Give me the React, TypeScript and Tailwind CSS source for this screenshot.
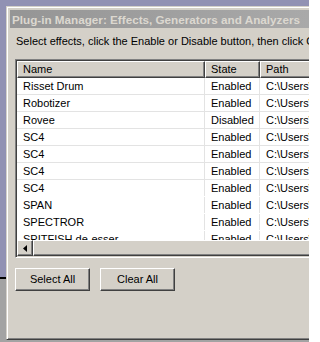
import React from "react";

const rows: { name: string; state: string; line: boolean }[] = [
  { name: "Risset Drum", state: "Enabled", line: true },
  { name: "Robotizer", state: "Enabled", line: true },
  { name: "Rovee", state: "Disabled", line: true },
  { name: "SC4", state: "Enabled", line: true },
  { name: "SC4", state: "Enabled", line: true },
  { name: "SC4", state: "Enabled", line: true },
  { name: "SC4", state: "Enabled", line: false },
  { name: "SPAN", state: "Enabled", line: false },
  { name: "SPECTROR", state: "Enabled", line: false },
  { name: "SPITFISH de-esser", state: "Enabled", line: false },
];

const raised =
  "border border-t-white border-l-white border-b-[#404040] border-r-[#404040] shadow-[inset_-1px_-1px_#808080]";

function HeaderCell({ label, w }: { label: string; w: string }) {
  return (
    <div className={`${w} h-[17px] shrink-0 bg-[#d4d0c8] ${raised} pl-[5px] flex items-center`}>
      {label}
    </div>
  );
}

function Button({ label }: { label: string }) {
  return (
    <div className={`w-[75px] h-[23px] bg-[#d4d0c8] ${raised} flex items-center justify-center`}>
      {label}
    </div>
  );
}

export default function App() {
  return (
    <div
      className="w-[309px] h-[342px] overflow-hidden flex text-[11px] leading-[13px] text-black"
      style={{ fontFamily: '"Liberation Sans", Arial, sans-serif' }}
    >
      <div className="w-[6px] shrink-0 flex flex-col">
        <div className="h-[277px] bg-[#9191b3]" />
        <div className="h-[2px] bg-black" />
        <div className="flex-1 bg-[#a3a3a3]" />
      </div>

      <div className="flex-1 min-w-0 flex flex-col">
        <div className="h-[6px] shrink-0 bg-[#9191b3]" />

        {/* dialog window */}
        <div className="h-[334px] w-[640px] shrink-0 bg-[#d4d0c8] border border-t-[#d4d0c8] border-l-[#d4d0c8] border-b-[#404040] border-r-[#404040] shadow-[inset_1px_1px_white,inset_-1px_-1px_#808080] p-[3px] flex flex-col">
          <div className="h-[18px] shrink-0 bg-gradient-to-r from-[#959595] to-[#c0c0c0] flex items-center pl-[2px] font-bold text-[11.7px] text-[#dcd8d0]">
            Plug-in Manager: Effects, Generators and Analyzers
          </div>

          <div className="pl-[6px] pt-[7px] whitespace-nowrap">
            Select effects, click the Enable or Disable button, then click OK.
          </div>

          {/* list view */}
          <div className="ml-[5px] mt-[11px] h-[199px] w-[600px] border border-t-[#808080] border-l-[#808080] border-b-white border-r-white p-[1px] shadow-[inset_1px_1px_#404040,inset_-1px_-1px_#d4d0c8] flex flex-col">
            <div className="flex shrink-0">
              <HeaderCell label="Name" w="w-[188px]" />
              <HeaderCell label="State" w="w-[55px]" />
              <HeaderCell label="Path" w="w-[350px]" />
            </div>
            <div className="h-[162px] overflow-hidden bg-white">
              {rows.map((r, i) => (
                <div
                  key={i}
                  className={`flex h-[17px] ${r.line ? "border-b border-[#e3e3e3]" : "border-b border-white"}`}
                >
                  <div className="w-[188px] shrink-0 pl-[6px] border-r border-[#e3e3e3] flex items-center">{r.name}</div>
                  <div className="w-[55px] shrink-0 pl-[6px] border-r border-[#e3e3e3] flex items-center">{r.state}</div>
                  <div className="flex-1 pl-[6px] flex items-center whitespace-nowrap">C:\Users\Admin\AppData</div>
                </div>
              ))}
            </div>
            <div className="h-[16px] shrink-0 flex bg-[#d4d0c8]">
              <div className={`w-[16px] h-[16px] shrink-0 bg-[#d4d0c8] ${raised} flex items-center justify-center`}>
                <svg width="4" height="7" viewBox="0 0 4 7">
                  <path d="M4 0 L0 3.5 L4 7 Z" fill="black" />
                </svg>
              </div>
              <div className={`flex-1 h-[16px] bg-[#d4d0c8] ${raised}`} />
            </div>
          </div>

          <div className="ml-[5px] mt-[10px] flex gap-[10px]">
            <Button label="Select All" />
            <Button label="Clear All" />
          </div>
        </div>

        <div className="flex-1 bg-[#a3a3a3]" />
      </div>
    </div>
  );
}
